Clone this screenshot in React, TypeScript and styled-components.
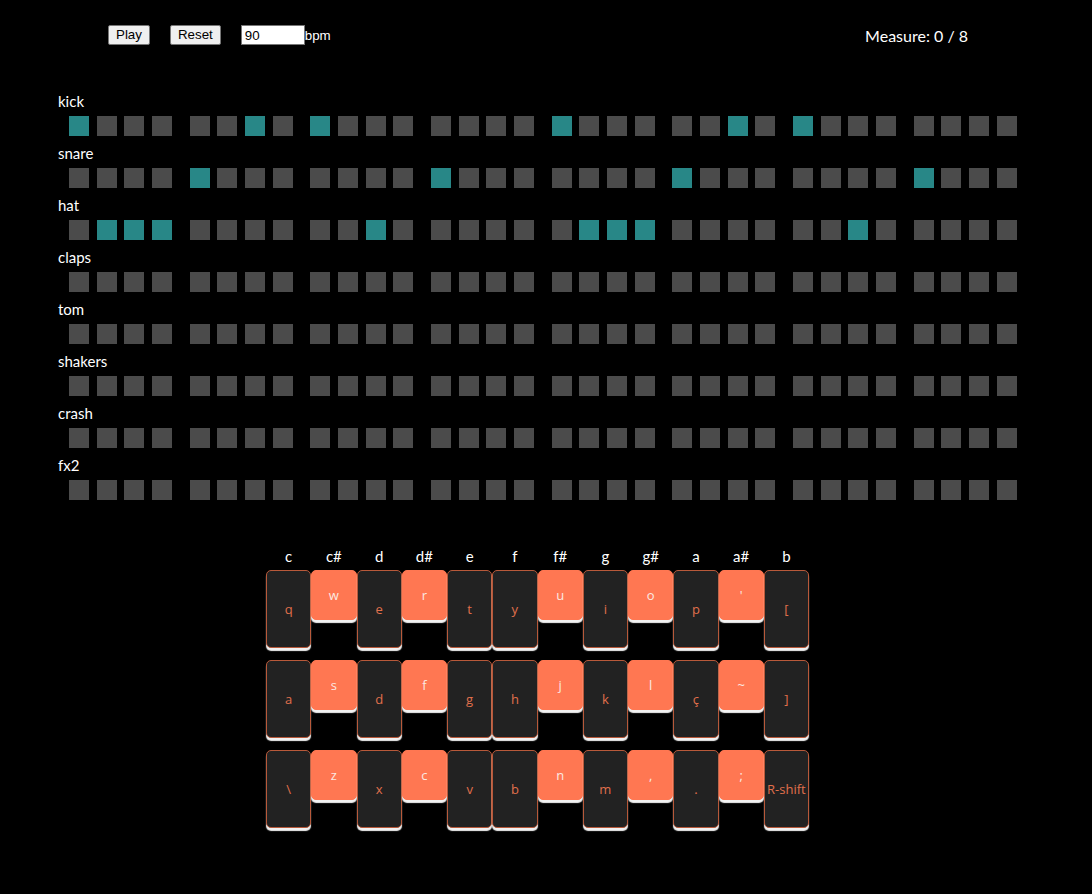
import React from "react";
import styled, { createGlobalStyle } from "styled-components";

const Global = createGlobalStyle`
  html, body { margin: 0; padding: 0; background: #000; }
  body { font-family: Lato, "Noto Sans", sans-serif; color: #fff; }
`;

const Page = styled.div`
  width: 1092px;
  min-height: 894px;
  background: #000;
  box-sizing: border-box;
  padding-top: 25px;
`;

const TopBar = styled.div`
  display: flex;
  align-items: center;
  justify-content: space-between;
  height: 20px;
  padding: 0 124px 0 108px;
`;

const Controls = styled.div`
  display: flex;
  align-items: center;
`;

const Button = styled.button`
  font-family: "Liberation Sans", Arial, sans-serif;
  font-size: 13.33px;
  height: 20px;
  padding: 0 7px;
  margin-right: 20px;
  background: #efefef;
  color: #000;
  border: 1px solid #767676;
  border-radius: 2px;
  box-sizing: border-box;
  line-height: 18px;
`;

const BpmInput = styled.input`
  font-family: "Liberation Sans", Arial, sans-serif;
  font-size: 13.33px;
  width: 64px;
  height: 20px;
  box-sizing: border-box;
  padding: 0 3px;
  border: 1px solid #767676;
  background: #fff;
  color: #000;
  outline: none;
`;

const Unit = styled.span`
  font-family: "Liberation Sans", Arial, sans-serif;
  font-size: 13.33px;
  color: #fff;
`;

const Measure = styled.div`
  font-size: 16px;
  color: #fff;
`;

const Sequencer = styled.div`
  margin-top: 47px;
  padding-left: 58px;
`;

const Track = styled.div`
  margin-bottom: 8px;
`;

const TrackName = styled.div`
  font-size: 15px;
  line-height: 18px;
  height: 18px;
`;

const Steps = styled.div`
  display: flex;
  gap: 17.6px;
  margin-top: 6px;
  margin-left: 11px;
`;

const Group = styled.div`
  display: flex;
  gap: 7.7px;
`;

const Step = styled.div<{ $on: boolean }>`
  width: 20px;
  height: 20px;
  background: ${(p) => (p.$on ? "#288787" : "#4b4b4b")};
`;

const Keyboard = styled.div`
  margin-top: 47px;
  margin-left: 266px;
  width: 543px;
`;

const NoteRow = styled.div`
  display: flex;
  height: 18px;
  margin-bottom: 5px;
`;

const NoteName = styled.div`
  width: 45.25px;
  text-align: center;
  font-size: 15px;
  line-height: 18px;
`;

const KeyRow = styled.div`
  display: flex;
  align-items: flex-start;
  height: 78px;
  margin-bottom: 12px;
`;

const Key = styled.div<{ $sharp: boolean }>`
  width: 45.25px;
  height: ${(p) => (p.$sharp ? "50px" : "78px")};
  box-sizing: border-box;
  border-radius: 5px;
  display: flex;
  align-items: center;
  justify-content: center;
  font-family: "Open Sans", "DejaVu Sans", sans-serif;
  font-size: 13px;
  white-space: nowrap;
  background: ${(p) => (p.$sharp ? "#ff7752" : "#222")};
  color: ${(p) => (p.$sharp ? "#fbe9e2" : "#e0704c")};
  border: 1px solid ${(p) => (p.$sharp ? "#ff7752" : "#b8593a")};
  box-shadow: 0 3px 1px rgba(255, 255, 255, 0.95);
`;

const tracks: { name: string; on: number[] }[] = [
  { name: "kick", on: [0, 6, 8, 16, 22, 24] },
  { name: "snare", on: [4, 12, 20, 28] },
  { name: "hat", on: [1, 2, 3, 10, 17, 18, 19, 26] },
  { name: "claps", on: [] },
  { name: "tom", on: [] },
  { name: "shakers", on: [] },
  { name: "crash", on: [] },
  { name: "fx2", on: [] },
];

const notes = ["c", "c#", "d", "d#", "e", "f", "f#", "g", "g#", "a", "a#", "b"];
const keyRows = [
  ["q", "w", "e", "r", "t", "y", "u", "i", "o", "p", "'", "["],
  ["a", "s", "d", "f", "g", "h", "j", "k", "l", "ç", "~", "]"],
  ["\\", "z", "x", "c", "v", "b", "n", "m", ",", ".", ";", "R-shift"],
];

export default function App() {
  return (
    <Page>
      <Global />
      <TopBar>
        <Controls>
          <Button>Play</Button>
          <Button>Reset</Button>
          <BpmInput type="text" defaultValue="90" />
          <Unit>bpm</Unit>
        </Controls>
        <Measure>Measure: 0 / 8</Measure>
      </TopBar>
      <Sequencer>
        {tracks.map((t) => (
          <Track key={t.name}>
            <TrackName>{t.name}</TrackName>
            <Steps>
              {Array.from({ length: 8 }).map((_, g) => (
                <Group key={g}>
                  {Array.from({ length: 4 }).map((_, s) => (
                    <Step key={s} $on={t.on.includes(g * 4 + s)} />
                  ))}
                </Group>
              ))}
            </Steps>
          </Track>
        ))}
      </Sequencer>
      <Keyboard>
        <NoteRow>
          {notes.map((n) => (
            <NoteName key={n}>{n}</NoteName>
          ))}
        </NoteRow>
        {keyRows.map((row, ri) => (
          <KeyRow key={ri}>
            {row.map((k, i) => (
              <Key key={i} $sharp={notes[i].includes("#")}>
                {k}
              </Key>
            ))}
          </KeyRow>
        ))}
      </Keyboard>
    </Page>
  );
}
